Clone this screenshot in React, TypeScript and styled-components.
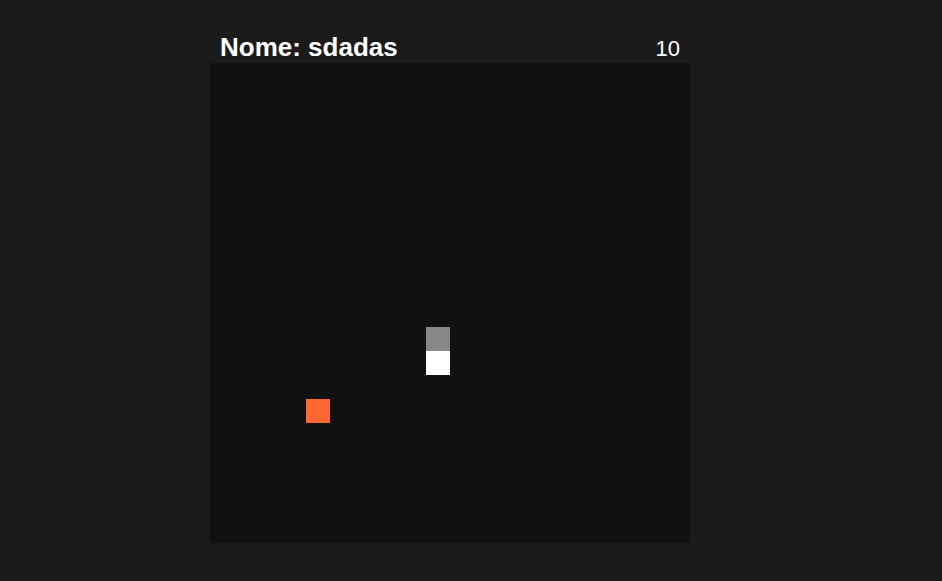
import React from "react";
import styled, { createGlobalStyle } from "styled-components";

const Global = createGlobalStyle`
  html, body { margin: 0; padding: 0; background: #1b1b1b; }
  body { font-family: "Liberation Sans", Arial, sans-serif; color: #fff; }
`;

const Page = styled.div`
  display: flex;
  justify-content: center;
  padding: 32px 42px 0 0;
  min-height: 581px;
  box-sizing: border-box;
`;

const Game = styled.div`
  display: flex;
  flex-direction: column;
  gap: 1px;
  width: 480px;
`;

const Header = styled.div`
  display: flex;
  justify-content: space-between;
  align-items: baseline;
  padding: 0 10px;
  height: 30px;
  line-height: 30px;
`;

const Name = styled.h2`
  margin: 0;
  font-size: 26px;
  font-weight: 700;
`;

const Score = styled.span`
  font-size: 22px;
`;

const Board = styled.div`
  display: grid;
  grid-template-columns: repeat(20, 24px);
  grid-template-rows: repeat(20, 24px);
  width: 480px;
  height: 480px;
  background: #111111;
`;

const Cell = styled.div<{ $col: number; $row: number; $color: string }>`
  grid-column: ${(p) => p.$col + 1};
  grid-row: ${(p) => p.$row + 1};
  background: ${(p) => p.$color};
`;

const snake = [
  { col: 9, row: 12, color: "#ffffff" },
  { col: 9, row: 11, color: "#888888" },
];
const food = { col: 4, row: 14 };

export default function App() {
  return (
    <>
      <Global />
      <Page>
        <Game>
          <Header>
            <Name>Nome: sdadas</Name>
            <Score>10</Score>
          </Header>
          <Board>
            {snake.map((s, i) => (
              <Cell key={i} $col={s.col} $row={s.row} $color={s.color} />
            ))}
            <Cell $col={food.col} $row={food.row} $color="#ff6633" />
          </Board>
        </Game>
      </Page>
    </>
  );
}
